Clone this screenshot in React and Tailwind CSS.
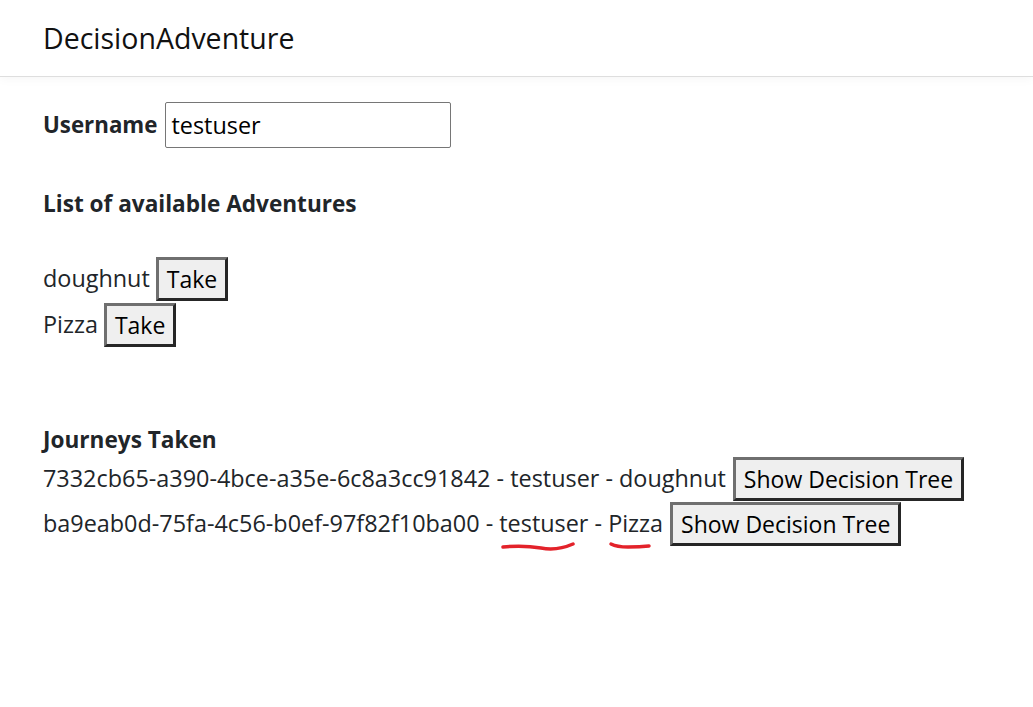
import React, { useState } from 'react';

const adventures = ['doughnut', 'Pizza'];

const journeys = [
    { id: '7332cb65-a390-4bce-a35e-6c8a3cc91842', user: 'testuser', adventure: 'doughnut' },
    { id: 'ba9eab0d-75fa-4c56-b0ef-97f82f10ba00', user: 'testuser', adventure: 'Pizza', marked: true },
];

const OldButton = ({ children }) => (
    <button className="h-[44px] px-[8px] bg-[#efefef] text-[#000] text-[23px] leading-none border-[3px] border-t-[#6f6f6f] border-l-[#6f6f6f] border-b-[#262626] border-r-[#262626]">
        {children}
    </button>
);

// red hand-drawn marks from the screenshot
const Scribble = ({ children, d, w }) => (
    <span className="relative">
        {children}
        <svg className="absolute left-0 top-full mt-[2px]" width={w} height="12" viewBox={`0 0 ${w} 12`}>
            <path d={d} fill="none" stroke="#e3222a" strokeWidth="3.5" strokeLinecap="round" />
        </svg>
    </span>
);

const App = () => {
    const [username, setUsername] = useState('testuser');

    return (
        <div className="min-h-[707px] bg-white text-[#212529] font-['Open_Sans',sans-serif] text-[23.4px]">
            <div className="h-[77px] flex items-center px-[43px] border-b border-[#dedede] shadow-[0_2px_10px_rgba(0,0,0,0.04)]">
                <span className="text-[28.5px] text-[#111]">DecisionAdventure</span>
            </div>

            <div className="px-[43px] pt-[25px]">
                <div className="flex items-center gap-[8px]">
                    <label className="font-bold text-[22.3px]">Username</label>
                    <input
                        className="h-[46px] w-[286px] px-[5px] border border-[#767676] rounded-[2px] text-[#000] outline-none"
                        value={username}
                        onChange={(e) => setUsername(e.target.value)}
                    />
                </div>

                <h3 className="mt-[41px] font-bold text-[22.6px] leading-[30px]">List of available Adventures</h3>

                <div className="mt-[38px] flex flex-col gap-[2px]">
                    {adventures.map((a) => (
                        <div key={a} className="flex items-center gap-[6px]">
                            <span>{a}</span>
                            <OldButton>Take</OldButton>
                        </div>
                    ))}
                </div>

                <h3 className="mt-[78px] font-bold text-[22.6px] leading-[30px]">Journeys Taken</h3>

                <div className="mt-[2px] flex flex-col gap-[1px]">
                    {journeys.map((j) => (
                        <div key={j.id} className="flex items-center gap-[7px]">
                            {j.marked ? (
                                <span>
                                    {j.id} - <Scribble w={84} d="M4 6 Q24 4 42 7 Q58 10 74 3">{j.user}</Scribble> -{' '}
                                    <Scribble w={52} d="M3 3 Q9 6 20 6 Q32 6 41 5">{j.adventure}</Scribble>
                                </span>
                            ) : (
                                <span>
                                    {j.id} - {j.user} - {j.adventure}
                                </span>
                            )}
                            <OldButton>Show Decision Tree</OldButton>
                        </div>
                    ))}
                </div>
            </div>
        </div>
    );
};

export default App;
